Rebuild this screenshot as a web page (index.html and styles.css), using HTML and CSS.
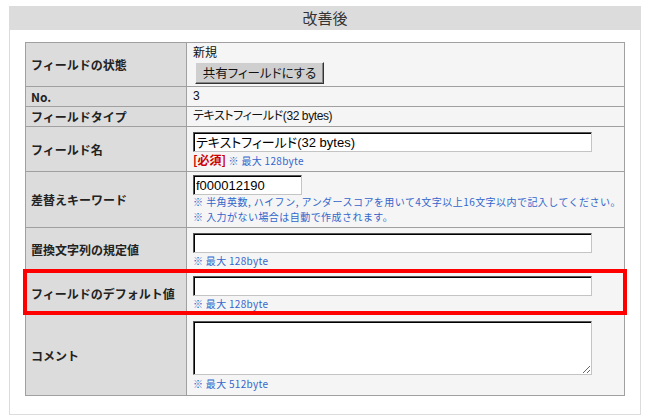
FILE: index.html
```html
<!DOCTYPE html>
<html lang="ja">
<head>
<meta charset="utf-8">
<title>改善後</title>
<link rel="stylesheet" href="styles.css">
</head>
<body>
<div class="panel">
  <div class="panel-title">改善後</div>
  <div class="panel-body">
    <div class="form-wrap">
      <table class="form">
        <tr class="r-status">
          <th>フィールドの状態</th>
          <td>
            <div class="line">新規</div>
            <button class="btn" type="button">共有フィールドにする</button>
          </td>
        </tr>
        <tr class="r-small">
          <th>No.</th>
          <td>3</td>
        </tr>
        <tr class="r-small">
          <th>フィールドタイプ</th>
          <td class="tight">テキストフィールド(32 bytes)</td>
        </tr>
        <tr class="r-name">
          <th>フィールド名</th>
          <td>
            <input class="text wide" type="text" value="テキストフィールド(32 bytes)">
            <div class="note"><span class="req">[必須]</span> ※ 最大 128byte</div>
          </td>
        </tr>
        <tr class="r-key">
          <th>差替えキーワード</th>
          <td>
            <input class="text short" type="text" value="f000012190">
            <div class="note multi">※ 半角英数, ハイフン, アンダースコアを用いて4文字以上16文字以内で記入してください。</div>
            <div class="note multi">※ 入力がない場合は自動で作成されます。</div>
          </td>
        </tr>
        <tr class="r-field">
          <th>置換文字列の規定値</th>
          <td>
            <input class="text wide" type="text" value="">
            <div class="note">※ 最大 128byte</div>
          </td>
        </tr>
        <tr class="r-field2">
          <th>フィールドのデフォルト値</th>
          <td>
            <input class="text wide" type="text" value="">
            <div class="note">※ 最大 128byte</div>
          </td>
        </tr>
        <tr class="r-comment">
          <th>コメント</th>
          <td>
            <textarea class="area"></textarea>
            <div class="note note-area">※ 最大 512byte</div>
          </td>
        </tr>
      </table>
      <div class="highlight"></div>
    </div>
  </div>
</div>
</body>
</html>
```
FILE: styles.css
```css
html, body {
  margin: 0;
  padding: 0;
  background: #fff;
}

body {
  font-family: "Liberation Sans", "Noto Sans CJK JP", sans-serif;
  color: #222;
}

.panel {
  margin: 6px 9px 0 9px;
  width: 632px;
}

.panel-title {
  height: 24px;
  line-height: 24px;
  background: #dcdcdc;
  text-align: center;
  font-family: "Noto Sans CJK JP", sans-serif;
  font-size: 15px;
  color: #333;
}

.panel-body {
  border: 1px solid #dcdcdc;
  border-top: none;
  padding: 12px 15px 18px 15px;
}

.form-wrap {
  position: relative;
  width: 600px;
}

.form {
  width: 600px;
  border-collapse: collapse;
  border: 1px solid #999;
  table-layout: fixed;
}

.form th,
.form td {
  border: 1px solid #a0a0a0;
  vertical-align: middle;
  font-size: 12px;
  line-height: 15px;
}

.form th {
  width: 155px;
  background: #dcdcdc;
  text-align: left;
  padding: 0 0 0 5px;
  font-family: "Noto Sans CJK JP", sans-serif;
  font-weight: bold;
  color: #222;
}

.form td {
  background: #f5f5f5;
  padding: 0 6px;
  font-family: "Liberation Sans", "Noto Sans CJK JP", sans-serif;
  font-feature-settings: "palt";
  color: #111;
}

.form td.tight {
  letter-spacing: -0.4px;
}

.r-status { height: 44px; }
.r-small { height: 20px; }
.r-name { height: 45px; }
.r-key { height: 56px; }
.r-field { height: 44px; }
.r-field2 { height: 43px; }
.r-comment { height: 81px; }

.line {
  line-height: 15px;
}

.btn {
  display: block;
  margin: 1px 0 0 2px;
  width: 129px;
  height: 22px;
  padding: 0;
  background: #cfcfcf;
  border: 1px solid;
  border-color: #f4f4f4 #333 #333 #f4f4f4;
  box-shadow: inset -1px -1px 0 #888;
  font-family: "Noto Sans CJK JP", sans-serif;
  font-feature-settings: "palt";
  font-size: 12.5px;
  color: #111;
}

.text {
  display: block;
  box-sizing: border-box;
  height: 20px;
  margin: 0;
  padding: 0 2px;
  background: #fff;
  border: 1px solid;
  border-color: #555 #c4c4c4 #c4c4c4 #555;
  box-shadow: inset 1px 1px 0 #000;
  font-family: "Liberation Sans", "Noto Sans CJK JP", sans-serif;
  font-feature-settings: "palt";
  font-size: 13px;
  color: #000;
  outline: none;
}

.wide { width: 399px; }
.short { width: 109px; }

.note {
  margin-top: 2px;
  font-family: "Noto Sans CJK JP", sans-serif;
  font-feature-settings: normal;
  font-size: 10px;
  line-height: 12px;
  letter-spacing: 0.3px;
  color: #3366cc;
  white-space: nowrap;
}

.note.multi {
  margin-top: 0;
  line-height: 14.5px;
  letter-spacing: 0.45px;
}

.note-area {
  margin-top: 3px;
}

.req {
  color: #cc0000;
  font-weight: bold;
  font-size: 12px;
  letter-spacing: 0;
}

.area {
  display: block;
  box-sizing: border-box;
  width: 399px;
  height: 54px;
  margin: 0;
  padding: 2px;
  background: #fff;
  border: 1px solid;
  border-color: #555 #c4c4c4 #c4c4c4 #555;
  box-shadow: inset 1px 1px 0 #000;
  font-family: "Liberation Sans", sans-serif;
  font-size: 13px;
  outline: none;
}

.highlight {
  position: absolute;
  left: -2px;
  top: 227px;
  width: 604px;
  height: 46px;
  box-sizing: border-box;
  border: 4px solid #ff0000;
  pointer-events: none;
}
```
